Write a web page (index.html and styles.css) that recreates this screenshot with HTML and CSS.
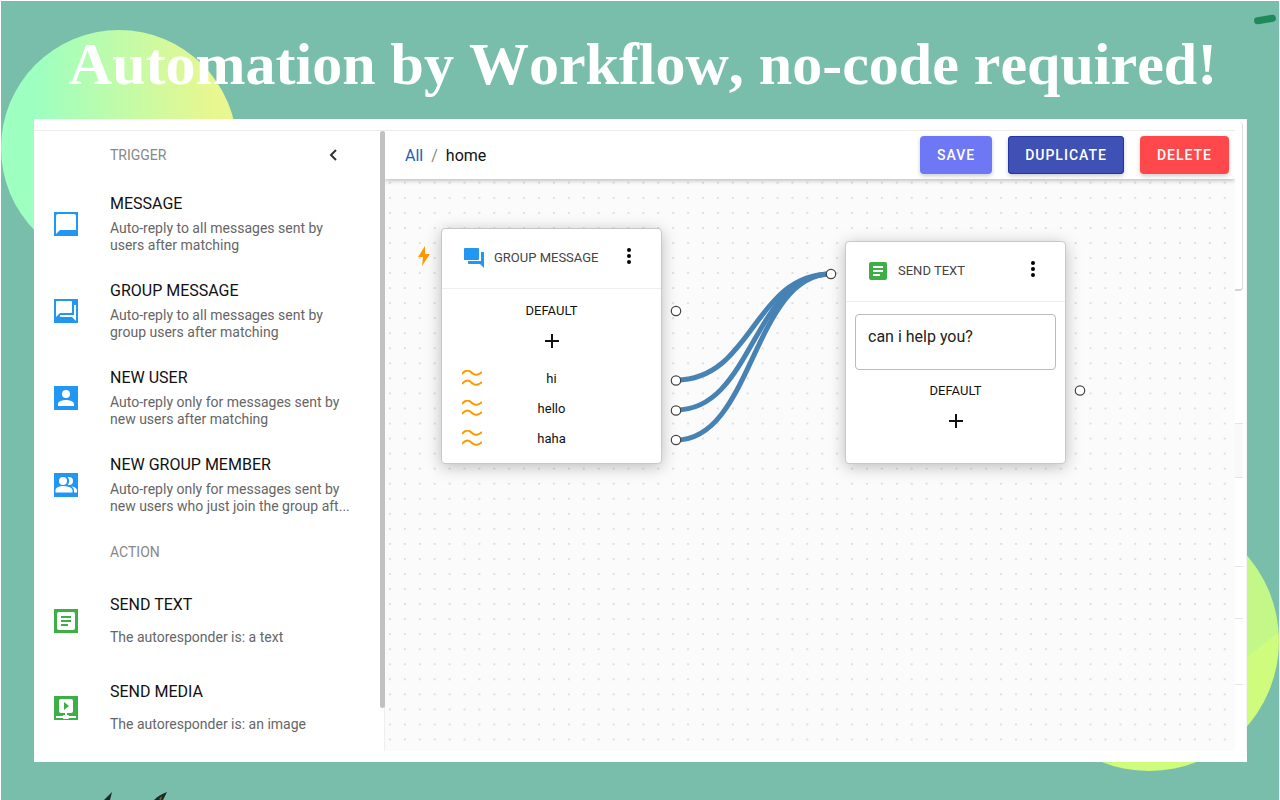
FILE: index.html
```
<!DOCTYPE html>
<html lang="en">
<head>
  <meta charset="UTF-8" />
  <title>Automation by Workflow</title>
  <link rel="stylesheet" href="styles.css">
</head>
<body>

  <span class="dash"></span>
  <svg class="leaves" viewBox="0 0 64 8" width="64" height="8" aria-hidden="true">
    <path d="M1 8 L9 0 L7 8 Z" fill="#1c2a28" />
    <path d="M51 8 C55 4 59 2 64 0 L60 8 Z" fill="#1c2a28" />
    <path d="M56 7 L59 4 L58 8 Z" fill="#8a6a22" />
  </svg>

  <header>
    <h1>Automation by Workflow, no-code required!</h1>
  </header>

  <main class="panel">
    <div class="strip"></div>

    <aside class="sidebar">
      <div class="list">
        <div class="list-head">
          <h2>TRIGGER</h2>
          <button class="collapse" aria-label="Collapse">
            <svg viewBox="0 0 24 24" width="24" height="24"><path d="M15 7 L10 12 L15 17" fill="none" stroke="#333" stroke-width="2" /></svg>
          </button>
        </div>
        <ul>
          <li>
            <svg class="icon" viewBox="0 0 24 24"><path fill="#2196f3" d="M0 0h24v24H0z" /><path fill="#fff" d="M4 2h16a2 2 0 0 1 2 2v14H6l-4 4V4a2 2 0 0 1 2-2z" /></svg>
            <div class="text">
              <h3>MESSAGE</h3>
              <p>Auto-reply to all messages sent by users after matching</p>
            </div>
          </li>
          <li>
            <svg class="icon" viewBox="0 0 24 24"><path fill="#2196f3" d="M0 0h24v24H0z" /><path fill="#fff" d="M3 2h14a1 1 0 0 1 1 1v10a1 1 0 0 1-1 1H6l-4 4V3a1 1 0 0 1 1-1zM22 6h-2v10H6v1a1 1 0 0 0 1 1h11l4 4z" /></svg>
            <div class="text">
              <h3>GROUP MESSAGE</h3>
              <p>Auto-reply to all messages sent by group users after matching</p>
            </div>
          </li>
          <li>
            <svg class="icon" viewBox="0 0 24 24"><path fill="#2196f3" d="M0 0h24v24H0z" /><path fill="#fff" d="M12 12a4 4 0 1 0 0-8 4 4 0 0 0 0 8zm0 2c-3 0-8 1-8 4v2h16v-2c0-3-5-4-8-4z" /></svg>
            <div class="text">
              <h3>NEW USER</h3>
              <p>Auto-reply only for messages sent by new users after matching</p>
            </div>
          </li>
          <li>
            <svg class="icon" viewBox="0 0 24 24"><path fill="#2196f3" d="M0 0h24v24H0z" /><path fill="#fff" d="M17 13.200c1.800 1 3 2.300 3 4V19.500h3v-2.300c0-2.200-3.200-3.500-6-4zM15 12a4 4 0 0 0 0-8c-.5 0-.9.100-1.300.2a6 6 0 0 1 0 7.600c.4.100.8.200 1.300.2zM9 12a4 4 0 1 0 0-8 4 4 0 0 0 0 8zm0 1c-2.700 0-7.500 1.300-7.500 4.200V19.500h17v-2.300C18.500 14.300 11.700 13 9 13z" /></svg>
            <div class="text">
              <h3>NEW GROUP MEMBER</h3>
              <p>Auto-reply only for messages sent by new users who just join the group aft...</p>
            </div>
          </li>
        </ul>
        <div class="list-head">
          <h2>ACTION</h2>
        </div>
        <ul>
          <li>
            <svg class="icon" viewBox="0 0 24 24"><path fill="#3eaf46" d="M0 0h24v24H0z" /><rect x="3" y="3" width="18" height="18" rx="2" fill="#fff" /><path stroke="#3eaf46" stroke-width="2" d="M7 8h10M7 12h10M7 16h7" /></svg>
            <div class="text single">
              <h3>SEND TEXT</h3>
              <p>The autoresponder is: a text</p>
            </div>
          </li>
          <li>
            <svg class="icon" viewBox="0 0 24 24"><path fill="#3eaf46" d="M0 0h24v24H0z" /><path fill="#fff" d="M7 3h10a2 2 0 0 1 2 2v10a2 2 0 0 1-2 2h-4v2h1a1 1 0 0 1 1 1h7v2h-7a1 1 0 0 1-1 1h-4a1 1 0 0 1-1-1H2v-2h7a1 1 0 0 1 1-1h1v-2H7a2 2 0 0 1-2-2V5a2 2 0 0 1 2-2z" /><path fill="#3eaf46" d="M10 6v8l5-4z" /></svg>
            <div class="text single">
              <h3>SEND MEDIA</h3>
              <p>The autoresponder is: an image</p>
            </div>
          </li>
        </ul>
      </div>
      <div class="rail"><div class="thumb"></div></div>
    </aside>

    <section class="workspace">
      <div class="toolbar">
        <nav>
          <a href="#">All</a>
          <span class="slash">/</span>
          <span>home</span>
        </nav>
        <div class="actions">
          <button class="btn save">SAVE</button>
          <button class="btn duplicate">DUPLICATE</button>
          <button class="btn delete">DELETE</button>
        </div>
      </div>

      <div class="canvas">
        <svg class="bolt" viewBox="0 0 12 22" width="12" height="22"><path fill="#ff9800" d="M7 1 L0 12 H5 L4 21 L12 9 H7 Z" /></svg>

        <div class="node group">
          <div class="node-head">
            <svg viewBox="0 0 24 24" width="24" height="24"><path fill="#2196f3" d="M3 2h13a1 1 0 0 1 1 1v10a1 1 0 0 1-1 1H2V3a1 1 0 0 1 1-1zM19 6h3v16l-4-4H7a1 1 0 0 1-1-1v-2h13z" /></svg>
            <h4>GROUP MESSAGE</h4>
            <button class="more" aria-label="More"><svg viewBox="0 0 24 24" width="24" height="24"><circle cx="12" cy="6" r="2" /><circle cx="12" cy="12" r="2" /><circle cx="12" cy="18" r="2" /></svg></button>
          </div>
          <div class="node-body">
            <div class="row">DEFAULT</div>
            <button class="add" aria-label="Add"><svg viewBox="0 0 14 14" width="14" height="14"><path d="M7 0v14M0 7h14" stroke="#111" stroke-width="2" /></svg></button>
            <div class="row"><svg class="wave" viewBox="0 0 20 16" width="20" height="16"><path d="M0 4C4 -1 7 0 10 3S17 5 20 2M0 14C4 9 7 10 10 13S17 15 20 12" /></svg>hi</div>
            <div class="row"><svg class="wave" viewBox="0 0 20 16" width="20" height="16"><path d="M0 4C4 -1 7 0 10 3S17 5 20 2M0 14C4 9 7 10 10 13S17 15 20 12" /></svg>hello</div>
            <div class="row"><svg class="wave" viewBox="0 0 20 16" width="20" height="16"><path d="M0 4C4 -1 7 0 10 3S17 5 20 2M0 14C4 9 7 10 10 13S17 15 20 12" /></svg>haha</div>
          </div>
        </div>

        <div class="node send">
          <div class="node-head">
            <svg viewBox="0 0 24 24" width="24" height="24"><rect x="3" y="3" width="18" height="18" rx="2" fill="#3eaf46" /><path stroke="#fff" stroke-width="2" d="M7 8h10M7 12h10M7 16h7" /></svg>
            <h4>SEND TEXT</h4>
            <button class="more" aria-label="More"><svg viewBox="0 0 24 24" width="24" height="24"><circle cx="12" cy="6" r="2" /><circle cx="12" cy="12" r="2" /><circle cx="12" cy="18" r="2" /></svg></button>
          </div>
          <div class="node-body">
            <textarea aria-label="Reply text">can i help you?</textarea>
            <div class="row">DEFAULT</div>
            <button class="add" aria-label="Add"><svg viewBox="0 0 14 14" width="14" height="14"><path d="M7 0v14M0 7h14" stroke="#111" stroke-width="2" /></svg></button>
          </div>
        </div>

        <svg class="edges" width="850" height="400">
          <g fill="none" stroke="steelblue" stroke-width="5">
            <path d="M291 201 C368 201 368 95 446 95" />
            <path d="M291 231 C368 231 368 95 446 95" />
            <path d="M291 261 C368 261 368 95 446 95" />
          </g>
          <g fill="#fff" stroke="#444" stroke-width="1.200">
            <circle cx="291" cy="132" r="4.700" />
            <circle cx="291" cy="201.500" r="4.700" />
            <circle cx="291" cy="231.500" r="4.700" />
            <circle cx="291" cy="261" r="4.700" />
            <circle cx="446" cy="95" r="4.700" />
            <circle cx="695" cy="211.500" r="4.700" />
          </g>
        </svg>
      </div>
    </section>

    <div class="gutter">
      <div class="seg first"></div>
      <div class="seg second"></div>
      <div class="seg grey"></div>
      <div class="seg large"></div>
      <div class="seg small"></div>
      <div class="seg medium"></div>
    </div>
  </main>

</body>
</html>
```

FILE: styles.css
```
/* Base */
* {
  box-sizing: border-box;
}
body {
  margin: 0;
  min-height: 100vh;
  display: flex;
  flex-direction: column;
  position: relative;
  overflow: hidden;
  background: #79beaa;
  border: 1px solid #fff;
  border-bottom: none;
  font-family: Roboto, 'Liberation Sans', sans-serif;
  color: #111;
}
h1, h2, h3, h4, p, ul {
  margin: 0;
  padding: 0;
  font-weight: 400;
}
button {
  border: none;
  background: none;
  padding: 0;
  font-family: inherit;
  cursor: pointer;
}

/* Background shapes */
body::before,
body::after {
  content: "";
  position: absolute;
  border-radius: 50%;
}
body::before {
  left: 0;
  top: 29px;
  width: 236px;
  height: 236px;
  background: linear-gradient(90deg, #9dffc0 15%, #e8f78f 90%);
}
body::after {
  right: 0;
  bottom: 29px;
  width: 260px;
  height: 260px;
  background: linear-gradient(142deg, #c3f788 70%, #cffc7c 70%);
}
.dash {
  position: absolute;
  right: 3px;
  top: 15px;
  width: 22px;
  height: 7px;
  border-radius: 4px;
  background: #20895c;
  transform: rotate(-9deg);
}
.leaves {
  position: absolute;
  left: 102px;
  bottom: 0;
}

/* Title */
header {
  height: 118px;
  padding-left: 6px;
  position: relative;
  z-index: 1;
  text-align: center;
}
h1 {
  font-family: 'Liberation Serif', 'Times New Roman', serif;
  font-weight: 700;
  font-size: 60px;
  line-height: 126px;
  font-kerning: none;
  color: #fff;
  white-space: nowrap;
}

/* Panel */
.panel {
  flex: 1;
  position: relative;
  z-index: 2;
  margin: 0 32px 38px 33px;
  padding-bottom: 11px;
  background: #fff;
  display: grid;
  grid-template-columns: 351px 1fr 12px;
  grid-template-rows: 12px 1fr;
}
.strip {
  grid-column: 1 / 3;
  border-bottom: 1px solid #ececec;
}

/* Sidebar */
.sidebar {
  grid-column: 1;
  display: flex;
}
.list {
  flex: 1;
}
.list-head {
  height: 49px;
  padding: 0 35px 2px 76px;
  display: flex;
  align-items: center;
  justify-content: space-between;
}
.list-head h2 {
  font-size: 14px;
  color: #888;
}
.collapse {
  height: 24px;
}
.sidebar ul {
  list-style: none;
}
.sidebar li {
  height: 87px;
  padding: 0 28px 0 20px;
  display: flex;
  align-items: center;
}
.icon {
  width: 24px;
  height: 24px;
  margin-right: 32px;
  flex-shrink: 0;
}
.text {
  flex: 1;
  padding-bottom: 2px;
}
.text h3 {
  font-size: 16px;
  line-height: 24px;
}
.text p {
  margin-top: 4px;
  font-size: 14px;
  line-height: 17px;
  color: #666;
}
.text.single p {
  margin-top: 12px;
}
.rail {
  width: 5px;
  border-right: 1px solid #eee;
}
.thumb {
  width: 5px;
  height: 93%;
  background: #c1c1c1;
  border-radius: 3px;
}

/* Toolbar */
.workspace {
  display: flex;
  flex-direction: column;
}
.toolbar {
  height: 48px;
  padding: 0 6px 0 20px;
  display: flex;
  align-items: center;
  justify-content: space-between;
  position: relative;
  z-index: 1;
  background: #fff;
  box-shadow: 0 1px 5px rgba(0, 0, 0, 0.3);
  clip-path: inset(0 0 -10px 0);
}
.toolbar nav {
  display: flex;
  gap: 8px;
  font-size: 16px;
}
.toolbar a {
  color: #1e5fb8;
  text-decoration: none;
}
.slash {
  color: #888;
}
.actions {
  display: flex;
  gap: 16px;
}
.btn {
  height: 38px;
  padding: 0 17px;
  border-radius: 4px;
  color: #fff;
  font-size: 14px;
  font-weight: 500;
  letter-spacing: 1px;
  box-shadow: 0 2px 4px rgba(0, 0, 0, 0.2);
}
.save {
  background: #6e78f5;
}
.duplicate {
  background: #3f51b5;
  box-shadow: inset 0 0 0 1px #2336a5, 0 2px 4px rgba(0, 0, 0, 0.2);
}
.delete {
  background: #ff484c;
}

/* Canvas */
.canvas {
  flex: 1;
  position: relative;
  overflow: hidden;
  background: #fbfbfb radial-gradient(circle at 5px 4px, #dedede 1px, transparent 1px);
  background-size: 15px 15px;
  background-repeat: round;
}
.edges {
  position: absolute;
  left: 0;
  top: 0;
  pointer-events: none;
}
.bolt {
  position: absolute;
  left: 33px;
  top: 66px;
}
.node {
  position: absolute;
  width: 221px;
  background: #fff;
  border: 1px solid #c8c8c8;
  border-radius: 4px;
  box-shadow: 0 3px 16px rgba(0, 0, 0, 0.25);
}
.node.group {
  left: 56px;
  top: 49px;
}
.node.send {
  left: 460px;
  top: 62px;
}
.node-head {
  height: 60px;
  padding: 0 20px 2px;
  display: flex;
  align-items: center;
  border-bottom: 1px solid #eee;
}
.node-head h4 {
  flex: 1;
  margin-left: 8px;
  font-size: 13px;
  color: #444;
}
.more {
  width: 24px;
  height: 28px;
}
.node-body {
  padding: 6px 9px 10px;
}
.send .node-body {
  padding-bottom: 20px;
}
.row {
  height: 30px;
  display: flex;
  align-items: center;
  justify-content: center;
  position: relative;
  font-size: 13px;
}
.wave {
  position: absolute;
  left: 11px;
  fill: none;
  stroke: #ff9800;
  stroke-width: 2;
}
.add {
  display: flex;
  align-items: center;
  justify-content: center;
  width: 100%;
  height: 32px;
  margin-bottom: 6px;
}
textarea {
  display: block;
  width: 100%;
  height: 56px;
  margin: 6px 0 5px;
  padding: 12px;
  border: 1px solid #bbb;
  border-radius: 4px;
  resize: none;
  overflow: hidden;
  font-family: inherit;
  font-size: 16px;
  line-height: 20px;
  color: #222;
}

/* Page edge behind the canvas */
.gutter {
  grid-column: 3;
  grid-row: 1 / 3;
  display: flex;
  flex-direction: column;
  padding: 3px 3px 0 0;
  background: #fff;
  border-right: 1px solid #f4f4f4;
}
.seg {
  border-bottom: 1px solid #e4e4e4;
}
.seg.first {
  height: 169px;
  border-right: 1px solid #ddd;
  border-bottom: 2px solid #d4d4d4;
  border-radius: 0 4px 4px 0;
}
.seg.second {
  height: 133px;
}
.seg.grey {
  height: 54px;
  background: #f9f9f9;
}
.seg.large {
  height: 89px;
}
.seg.small {
  height: 52px;
}
.seg.medium {
  height: 66px;
}
```
